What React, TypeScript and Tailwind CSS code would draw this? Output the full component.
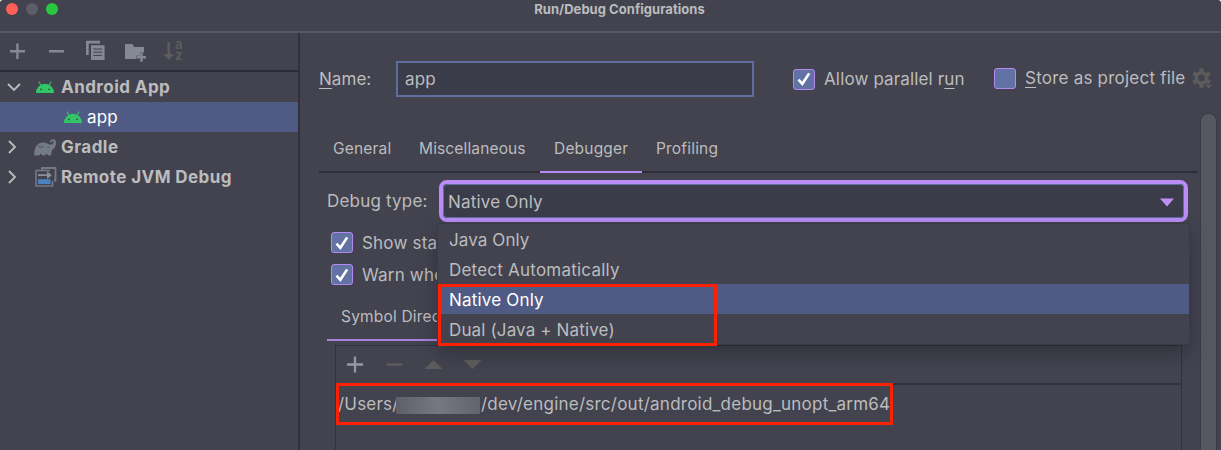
import React from "react";

function Check({ checked = true }: { checked?: boolean }) {
  return (
    <span className="flex h-[21px] w-[22px] shrink-0 items-center justify-center rounded-[3px] border-[1.5px] border-[#b589f0] bg-[#6272a4]">
      {checked && (
        <svg width="16" height="16" viewBox="0 0 16 16" fill="none" stroke="#fff" strokeWidth="2.6">
          <path d="M2.5 8.6 6.3 12.8 13.2 2.4" />
        </svg>
      )}
    </span>
  );
}

function AndroidIcon() {
  return (
    <svg width="18" height="12" viewBox="0 0 18 12" className="shrink-0">
      <path d="M0 12a9 9.3 0 0 1 18 0z" fill="#32c766" />
      <path d="M5 4.4 2.9.5M13 4.4 15.1.5" stroke="#32c766" strokeWidth="1.1" />
      <circle cx="5" cy="8.3" r=".9" fill="#3f4450" />
      <circle cx="13" cy="8.3" r=".9" fill="#3f4450" />
    </svg>
  );
}

function GradleIcon() {
  return (
    <svg width="23" height="17" viewBox="0 0 23 17" className="shrink-0">
      <path
        d="M.3 16.500C0 11 1.500 6.200 5.500 4.300c3-1.300 6.500-.6 9.300.9 2.200 1.100 4.300-.1 4.800-2l2.400.8c.2 3.200-1.700 5.700-3.700 6.600-.6 2.200-1.100 3.900-1.200 5.900H14c-.2-2-2.600-2.200-2.900 0H8.300c-.3-2.100-2.700-2.200-3 0z"
        fill="#747a86"
      />
      <path d="M16.600 3.300C16.800.4 21.800.3 21.200 4.200" fill="none" stroke="#747a86" strokeWidth="1.900" />
      <path d="M4.500 6.500c.6 2.300 3.600 2.300 5.300.1M13.500 7.800l1.800.9" fill="none" stroke="#42434f" strokeWidth=".8" />
    </svg>
  );
}

function RemoteIcon() {
  return (
    <svg width="22" height="20" viewBox="0 0 22 20" fill="none" className="shrink-0">
      <path d="M7 3.500V1h13.500v12.500H19" stroke="#747a86" strokeWidth="1.800" />
      <path d="M15 3.500H1v15.500h16.500v-5" stroke="#747a86" strokeWidth="1.600" />
      <path d="M3 8.200h11" stroke="#8b909b" strokeWidth="1.800" />
      <path d="m12 4.300 4.800 3.900-4.800 3.900z" fill="#8b909b" />
      <path d="M3 12.300h12.500v4.700H3z" fill="#4a83bf" />
    </svg>
  );
}

function Chevron({ open = false }: { open?: boolean }) {
  return (
    <svg width="14" height="14" viewBox="0 0 14 14" fill="none" stroke="#bcbcbd" strokeWidth="1.800" className="shrink-0">
      <path d={open ? "M1 4l6 6 6-6" : "M3 1l6 6-6 6"} />
    </svg>
  );
}

function Sidebar() {
  return (
    <aside className="flex w-[300px] shrink-0 flex-col border-r-2 border-[#30313d]">
      <div className="flex h-[39px] shrink-0 border-b-2 border-[#2b2c38]">
        <svg width="175" height="37" viewBox="0 0 175 37">
          <path d="M10 18.300h15M17.400 10.500v15.500M49 18.300h15" stroke="#858994" strokeWidth="2.400" />
          <path d="M86 22V7.800h14v2.700H88.700V22z" fill="#858994" />
          <path d="M91 12.200h13.600V27H91z" fill="#858994" />
          <path d="M93.300 16h8.900M93.300 19.200h8.900M93.300 22.400h8.900" stroke="#42434f" strokeWidth="1" />
          <path d="M125 26V11h7.200l2 3H144v5.500h-4v3.200h-3.500V26z" fill="#858994" />
          <path d="M137 24.200h9M141.500 19.700v9" stroke="#858994" strokeWidth="2.400" />
          <path d="M168.700 9v14" stroke="#5b5c5b" strokeWidth="2.600" />
          <path d="M163.300 21h10.800l-5.400 6z" fill="#5b5c5b" />
        </svg>
        <span className="flex flex-col pt-[6px] text-[13px] font-bold leading-[11px] text-[#5b5c5b]">
          <span className="h-[11px]">a</span>
          <span className="h-[11px]">z</span>
        </span>
      </div>
      <div className="flex h-[30px] items-center pl-[7px] font-bold tracking-[0.44px]">
        <Chevron open />
        <span className="ml-[15px] mr-[7px]"><AndroidIcon /></span>
        <span>Android App</span>
      </div>
      <div className="flex h-[30px] items-center bg-[#4f5b85] pl-16 text-white">
        <AndroidIcon />
        <span className="ml-[5px]">app</span>
      </div>
      <div className="flex h-[30px] items-center pl-[6px] font-bold tracking-[0.45px]">
        <Chevron />
        <span className="ml-[14px] mr-1"><GradleIcon /></span>
        <span>Gradle</span>
      </div>
      <div className="flex h-[30px] items-center pl-[6px] font-bold tracking-[0.42px]">
        <Chevron />
        <span className="ml-[15px] mr-1"><RemoteIcon /></span>
        <span>Remote JVM Debug</span>
      </div>
    </aside>
  );
}

function Dropdown() {
  return (
    <div className="absolute left-[137px] top-[190px] z-10 flex h-[122px] w-[753px] flex-col border border-[#3a3b47] bg-[#42434f] shadow-[0_8px_18px_rgba(0,0,0,0.25)]">
      <div className="flex h-[30px] items-center pl-[11px] pt-[2px] tracking-[0.1px]"><span>Java Only</span></div>
      <div className="flex h-[30px] items-center pl-[11px] pt-[2px] tracking-[0.22px]"><span>Detect Automatically</span></div>
      <div className="flex h-[30px] items-center bg-[#4f5b85] pl-[11px] pt-[2px] text-white"><span>Native Only</span></div>
      <div className="flex h-[30px] items-center pl-[11px] pt-[2px] tracking-[0.14px]"><span>Dual (Java + Native)</span></div>
      <div className="absolute left-0 top-[60px] h-[62px] w-[279px] border-[3px] border-[#fb2104]" />
    </div>
  );
}

function Main() {
  return (
    <main className="relative flex min-w-0 flex-1 flex-col">
      <div className="flex h-[92px] shrink-0 items-center pl-[19px]">
        <span className="w-[77px] tracking-[0.05px]"><u className="decoration-1 underline-offset-[3px]">N</u>ame:</span>
        <div className="flex h-9 w-[358px] items-center border-2 border-[#5d6e9f] bg-[#3a3c4a] pl-[7px]">app</div>
        <label className="ml-[39px] flex w-[201px] items-center gap-[9px] tracking-[0.14px]">
          <Check /><span>Allow parallel r<u className="decoration-1 underline-offset-[3px]">u</u>n</span>
        </label>
        <label className="-mt-[2px] flex items-center gap-[9px] tracking-[0.22px]">
          <Check checked={false} /><span><u className="decoration-1 underline-offset-[3px]">S</u>tore as project file</span>
        </label>
        <svg width="21" height="22" viewBox="0 0 21 22" className="ml-[7px] shrink-0">
          <circle cx="9.500" cy="10" r="5.200" fill="none" stroke="#5b5c5b" strokeWidth="3.600" />
          <path d="M9.500.3V4M9.500 16v3.700M1.300 5.200l3 1.700M14.700 13l3 1.700M1.300 14.800l3-1.700M14.700 7l3-1.700" stroke="#5b5c5b" strokeWidth="4.200" />
          <path d="M12.500 16.500H21l-4.200 4.500z" fill="#5b5c5b" stroke="#42434f" strokeWidth=".8" />
        </svg>
      </div>
      <nav className="mr-[23px] ml-[19px] flex h-[48px] shrink-0 border-b-2 border-[#2d2e3a] text-[15.500px]">
        <span className="flex h-[48px] w-[86px] items-center pl-[14px]">General</span>
        <span className="flex h-[48px] w-[135px] items-center pl-[14px] tracking-[0.14px]">Miscellaneous</span>
        <span className="flex h-[48px] w-[102px] items-center border-b-2 border-[#b589f5] pl-[14px] pt-[2px]">Debugger</span>
        <span className="flex h-[48px] items-center pl-[14px]">Profiling</span>
      </nav>
      <div className="mt-[7px] flex h-[42px] shrink-0 items-center pl-[27px]">
        <span className="w-[112px]">Debug type:</span>
        <div className="h-[42px] w-[749px] rounded-[8px] border-4 border-[#b98cf6]">
          <div className="flex h-full items-center justify-between rounded-[4px] border border-[#5d6e9f] bg-[#3a3c4a] pl-1 pr-[9px]">
            <span className="pt-[2px]">Native Only</span>
            <svg width="14" height="9" viewBox="0 0 14 9" className="mt-[2px]"><path d="M0 .5h14L7 8.500z" fill="#c08ff8" /></svg>
          </div>
        </div>
      </div>
      <div className="mt-[10px] flex h-[21px] shrink-0 items-center gap-[9px] pl-[31px]"><Check /><span>Show sta</span></div>
      <div className="mt-[11px] flex h-[21px] shrink-0 items-center gap-[9px] pl-[31px]"><Check /><span>Warn whe</span></div>
      <div className="ml-[27px] mt-[8px] flex h-[48px] w-[120px] shrink-0 items-center border-b-2 border-[#a982e0] pl-[14px] pt-px text-[15.500px] whitespace-nowrap">Symbol Direc</div>
      <div className="ml-[35px] mt-[4px] flex w-[847px] flex-1 flex-col border border-b-0 border-[#30313d]">
        <div className="h-[39px] shrink-0 border-b-2 border-[#30313d]">
          <svg width="150" height="37" viewBox="0 0 150 37">
            <path d="M11 18.500h16M19 10.500v16" stroke="#9698a2" strokeWidth="2.300" />
            <path d="M50.500 18.500h16" stroke="#5b5c5b" strokeWidth="2.300" />
            <path d="m88.500 23 9-9 9 9zM127.500 14h18l-9 9z" fill="#5b5c5b" />
          </svg>
        </div>
        <div className="relative flex h-9 items-center pl-[2px] pt-px">
          <span className="w-[58px]">/Users/</span>
          <span className="mt-[3px] h-[17px] w-[84px] bg-linear-to-r from-[#5e5f69] via-[#767780] to-[#62636d]" />
          <span className="ml-px tracking-[0.24px]">/dev/engine/src/out/android_debug_unopt_arm64</span>
          <div className="absolute left-0 -top-[2px] h-[42px] w-[557px] border-[3px] border-[#fb2104]" />
        </div>
      </div>
      <Dropdown />
      <div className="absolute bottom-0 right-[4px] top-[80px] w-[17px] rounded-t-[8px] border border-b-0 border-[#3a3b45] bg-[#565861]" />
    </main>
  );
}

export default function App() {
  return (
    <div className="h-[450px] w-[1221px] bg-white">
      <div className="flex h-full flex-col overflow-hidden rounded-tl-[3px] rounded-tr-[3px] bg-[#42434f] font-['Inter',sans-serif] text-[17px] leading-6 tracking-[0.19px] text-[#bcbcbd]">
        <header className="relative flex h-[33px] shrink-0 justify-center border-b-2 border-[#56585f]">
          <div className="absolute left-[6px] top-[3px] flex gap-2">
            <span className="size-3 rounded-full bg-[#ff5f57]" />
            <span className="size-3 rounded-full bg-[#5d5e6a]" />
            <span className="size-3 rounded-full bg-[#28c840]" />
          </div>
          <span className="ml-[18px] text-[13px] font-bold leading-[18px] tracking-[0.04px]">Run/Debug Configurations</span>
        </header>
        <div className="flex min-h-0 flex-1">
          <Sidebar />
          <Main />
        </div>
      </div>
    </div>
  );
}
